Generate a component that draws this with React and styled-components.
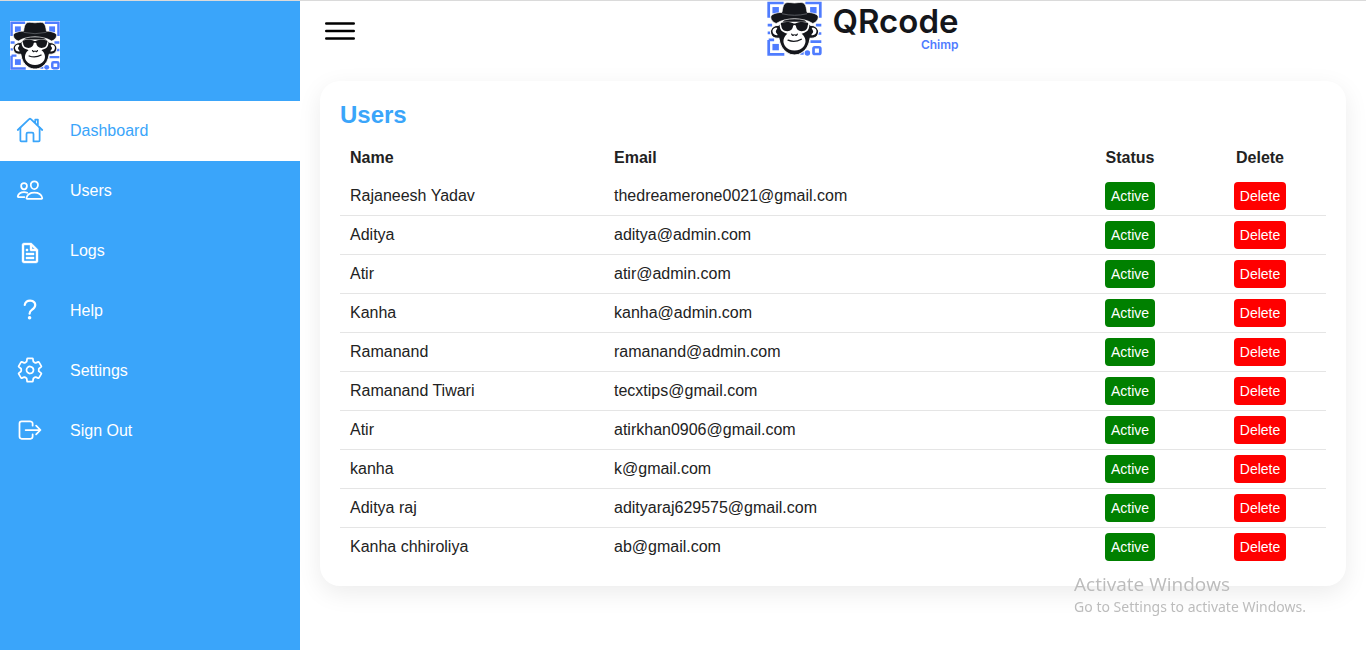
import React from "react";
import styled, { createGlobalStyle } from "styled-components";
import {
  IoHomeOutline,
  IoPeopleOutline,
  IoHelpOutline,
  IoSettingsOutline,
  IoLogOutOutline,
  IoMenuOutline,
} from "react-icons/io5";
import { BiFile } from "react-icons/bi";

const BLUE = "#3aa5fa";

const GlobalStyle = createGlobalStyle`
  * { box-sizing: border-box; margin: 0; padding: 0; }
  body {
    background: #fff;
    color: #222;
    font-family: "Liberation Sans", Arial, sans-serif;
    font-size: 16px;
  }
`;

const Page = styled.div`
  display: flex;
  min-height: 100vh;
  border-top: 1px solid #dadada;
`;

const Sidebar = styled.nav`
  flex: 0 0 300px;
  background: ${BLUE};
`;

const Brand = styled.a`
  display: block;
  height: 100px;
  padding: 20px 10px;
`;

const Menu = styled.ul`
  list-style: none;
`;

const MenuLink = styled.a`
  display: flex;
  height: 60px;
  line-height: 60px;
  text-decoration: none;
  color: ${(p) => (p.$active ? BLUE : "#fff")};
  background: ${(p) => (p.$active ? "#fff" : "transparent")};
`;

const MenuIcon = styled.span`
  display: flex;
  align-items: center;
  justify-content: center;
  width: 60px;
  height: 60px;
  margin-right: 10px;
  padding: ${(p) => (p.$low ? "4px 0 0" : "0 0 2px")};
`;

const Main = styled.main`
  flex: 1;
  min-width: 0;
`;

const Topbar = styled.header`
  display: grid;
  grid-template-columns: 60px 1fr;
  height: 60px;
  padding: 0 10px;
`;

const Toggle = styled.button`
  display: flex;
  align-items: center;
  justify-content: center;
  border: 0;
  background: none;
  color: #000;
  cursor: pointer;
`;

const Logo = styled.div`
  display: flex;
  justify-content: center;
  gap: 10px;
`;

const Wordmark = styled.div`
  display: flex;
  flex-direction: column;
  align-items: flex-end;
  padding-top: 3px;
  font-family: Inter, sans-serif;
  color: #14161b;
`;

const WordmarkName = styled.span`
  font-size: 33px;
  font-weight: 600;
  line-height: 34px;
`;

const WordmarkSub = styled.span`
  font-size: 12px;
  font-weight: 600;
  line-height: 14px;
  color: #4f7cff;
`;

const Card = styled.section`
  margin: 20px;
  padding: 20px;
  border-radius: 20px;
  background: #fff;
  box-shadow: 0 7px 25px rgba(0, 0, 0, 0.08);
`;

const Title = styled.h2`
  font-size: 24px;
  line-height: 28px;
  color: ${BLUE};
`;

const Table = styled.table`
  width: 100%;
  margin-top: 10px;
  border-collapse: collapse;
  table-layout: fixed;
`;

const Col = styled.col`
  width: ${(p) => p.$width};
`;

const Th = styled.th`
  height: 38px;
  padding: 0 10px;
  line-height: 18px;
  text-align: ${(p) => p.$align || "left"};
`;

const Row = styled.tr`
  border-bottom: 1px solid rgba(0, 0, 0, 0.1);
  &:last-child { border-bottom: 0; }
`;

const Td = styled.td`
  padding: 5px 10px;
  line-height: 28px;
  text-align: ${(p) => p.$align || "left"};
`;

const Pill = styled.button`
  display: block;
  margin: 0 auto;
  padding: 6px;
  border: 0;
  border-radius: 4px;
  background: ${(p) => p.$color};
  color: #fff;
  font-family: inherit;
  font-size: 14px;
  font-weight: 500;
  line-height: 16px;
  cursor: pointer;
`;

const Watermark = styled.aside`
  position: fixed;
  right: 60px;
  bottom: 33px;
  color: #bcbcbc;
  pointer-events: none;
`;

const WatermarkTitle = styled.p`
  font-family: "Open Sans", sans-serif;
  font-size: 19px;
  line-height: 26px;
`;

const WatermarkText = styled.p`
  font-family: "Noto Sans", sans-serif;
  font-size: 14px;
  line-height: 20px;
`;

function Chimp({ width, height, backdrop }) {
  return (
    <svg width={width} height={height} viewBox="36 4 162 164" preserveAspectRatio="none" role="img" aria-label="Chimp">
      {backdrop && <rect x="36" y="4" width="162" height="164" fill="#fff" />}
      <g fill="none" stroke="#4f7cff" strokeWidth="8">
        <path d="M41 54V10h44M149 10h44v44M41 120v43h46M41 120h16" />
        <rect x="173" y="142" width="20" height="20" rx="4" />
        <path d="M164 125h32M180 76h16M186 101h10M38 76h13M38 99h8M134 160h10" />
      </g>
      <g fill="#4f7cff">
        <rect x="52" y="22" width="19" height="19" />
        <rect x="163" y="22" width="19" height="19" />
        <rect x="52" y="132" width="19" height="19" />
        <circle cx="155" cy="159" r="8" />
      </g>
      <path d="M70 76C54 76 43 88 47 101c3 12 14 15 24 14 3 20 10 34 24 43 13 9 31 9 44 0 14-9 21-23 24-43 10 1 21-2 24-14 4-13-7-25-23-25l-20-20H90Z" fill="#14161b" stroke="#fff" strokeWidth="3" />
      <path d="M66 84c-10-2-16 6-13 14 2 7 9 9 14 8 1-4-5-5-5-11 0-5 5-6 4-11ZM168 84c10-2 16 6 13 14-2 7-9 9-14 8-1-4 5-5 5-11 0-5-5-6-4-11Z" fill="#fff" />
      <path d="M75 66h84c3 10 2 18-3 26-4 5-13 7-18 10 12 9 15 25 7 36-12 18-44 18-56 0-8-11-5-27 7-36-5-3-14-5-18-10-5-8-6-16-3-26Z" fill="#fff" />
      <path d="M78 69c12-4 26-3 35 1 3 1 5 1 8 0 9-4 23-5 35-1 2 2 2 5 0 8-1 12-7 17-18 17-10 0-16-6-17-16-1-3-7-3-8 0-1 10-7 16-17 16-11 0-17-5-18-17-2-3-2-6 0-8Z" fill="#14161b" />
      <path d="M109 103q3 6 6 2M125 103q-3 6-6 2M98 121q20 8 39-3" fill="none" stroke="#14161b" strokeWidth="4" strokeLinecap="round" />
      <path d="M80 38c2-12 3-19 7-25 6-7 19-4 30-3 11-1 24-4 30 3 4 6 5 13 7 25 17 0 33 6 33 14 0 9-7 16-16 19-16-10-34-14-54-14s-38 4-54 14c-9-3-16-10-16-19 0-8 16-14 33-14Z" fill="#14161b" stroke="#fff" strokeWidth="2" />
      <path d="M80 42q37 9 74 0" fill="none" stroke="#777a80" strokeWidth="2" />
    </svg>
  );
}

const menu = [
  { label: "Dashboard", icon: IoHomeOutline, size: 28, active: true },
  { label: "Users", icon: IoPeopleOutline, size: 28 },
  { label: "Logs", icon: BiFile, size: 24, low: true },
  { label: "Help", icon: IoHelpOutline, size: 28 },
  { label: "Settings", icon: IoSettingsOutline, size: 28 },
  { label: "Sign Out", icon: IoLogOutOutline, size: 28 },
];

const users = [
  ["Rajaneesh Yadav", "thedreamerone0021@gmail.com"],
  ["Aditya", "aditya@admin.com"],
  ["Atir", "atir@admin.com"],
  ["Kanha", "kanha@admin.com"],
  ["Ramanand", "ramanand@admin.com"],
  ["Ramanand Tiwari", "tecxtips@gmail.com"],
  ["Atir", "atirkhan0906@gmail.com"],
  ["kanha", "k@gmail.com"],
  ["Aditya raj", "adityaraj629575@gmail.com"],
  ["Kanha chhiroliya", "ab@gmail.com"],
];

export default function App() {
  return (
    <>
      <GlobalStyle />
      <Page>
        <Sidebar>
          <Brand href="#home" aria-label="Home">
            <Chimp width={50} height={49} backdrop />
          </Brand>
          <Menu>
            {menu.map(({ label, icon: Icon, size, low, active }) => (
              <li key={label}>
                <MenuLink href="#" $active={active}>
                  <MenuIcon $low={low}>
                    <Icon size={size} strokeWidth={low ? 0.4 : undefined} />
                  </MenuIcon>
                  {label}
                </MenuLink>
              </li>
            ))}
          </Menu>
        </Sidebar>
        <Main>
          <Topbar>
            <Toggle type="button" aria-label="Toggle menu">
              <IoMenuOutline size={40} />
            </Toggle>
            <Logo>
              <Chimp width={55} height={55} />
              <Wordmark>
                <WordmarkName>QRcode</WordmarkName>
                <WordmarkSub>Chimp</WordmarkSub>
              </Wordmark>
            </Logo>
          </Topbar>
          <Card>
            <Title>Users</Title>
            <Table>
              <colgroup>
                <Col $width="264px" />
                <Col $width="auto" />
                <Col $width="128px" />
                <Col $width="132px" />
              </colgroup>
              <thead>
                <tr>
                  <Th>Name</Th>
                  <Th>Email</Th>
                  <Th $align="center">Status</Th>
                  <Th $align="center">Delete</Th>
                </tr>
              </thead>
              <tbody>
                {users.map(([name, email]) => (
                  <Row key={email}>
                    <Td>{name}</Td>
                    <Td>{email}</Td>
                    <Td $align="center">
                      <Pill type="button" $color="#008000">Active</Pill>
                    </Td>
                    <Td $align="center">
                      <Pill type="button" $color="#ff0000">Delete</Pill>
                    </Td>
                  </Row>
                ))}
              </tbody>
            </Table>
          </Card>
        </Main>
      </Page>
      <Watermark>
        <WatermarkTitle>Activate Windows</WatermarkTitle>
        <WatermarkText>Go to Settings to activate Windows.</WatermarkText>
      </Watermark>
    </>
  );
}
